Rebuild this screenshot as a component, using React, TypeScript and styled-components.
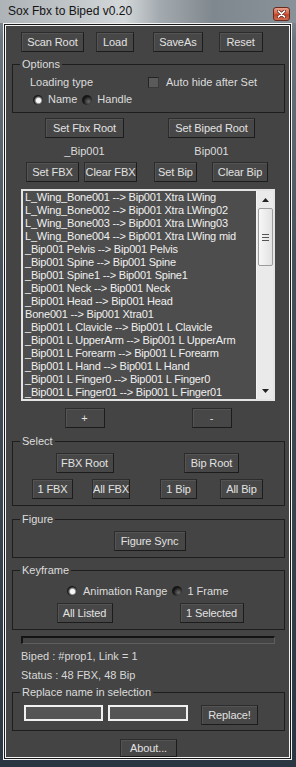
import React from 'react';
import styled, { createGlobalStyle } from 'styled-components';

const Global = createGlobalStyle`
  html, body { margin: 0; padding: 0; background: #fff; }
  body { font-family: "Liberation Sans", Arial, sans-serif; }
  * { box-sizing: border-box; }
`;

const Window = styled.div`
  width: 296px;
  height: 767px;
  display: flex;
  flex-direction: column;
  overflow: hidden;
  background: linear-gradient(180deg, #8c959b 0px, #6c767d 40px, #46525b 260px, #2a3641 767px);
`;

const TitleBar = styled.div`
  height: 23px;
  flex: none;
  display: flex;
  justify-content: space-between;
  padding: 0 6px 0 8px;
  background: linear-gradient(90deg, #aeb3b7 0%, #bfc4c7 22%, #d3d7d9 42%, #a3aaaf 54%, #7f888e 72%, #899298 100%);
`;

const TitleText = styled.div`
  font-size: 12px;
  line-height: 23px;
  color: #141414;
`;

const CloseBtn = styled.div`
  align-self: flex-end;
  margin-bottom: 2px;
  width: 17px;
  height: 14px;
  border-radius: 3px;
  border: 1px solid #6a2a1c;
  background: linear-gradient(180deg, #e9a08c 0%, #d6654a 45%, #c2452b 55%, #cf6a4c 100%);
  display: flex;
  align-items: center;
  justify-content: center;
`;

const ClientOuter = styled.div`
  flex: 1;
  margin: 0 4px 7px 3px;
  border: 1px solid #f4f4f4;
  background: #1b1b1b;
  padding: 1px;
  display: flex;
`;

const Client = styled.div`
  flex: 1;
  border: 1px solid #f4f4f4;
  background: #444444;
  display: flex;
  flex-direction: column;
  color: #dcdcdc;
  font-size: 11px;
`;

const Btn = styled.button<{ $w: number; $h?: number; $ml?: number }>`
  width: ${p => p.$w}px;
  height: ${p => p.$h ?? 20}px;
  margin: 0 0 0 ${p => p.$ml ?? 0}px;
  padding: 0;
  flex: none;
  background: #474747;
  border: 1px solid #2c2c2c;
  border-right-color: #1c1c1c;
  border-bottom-color: #1c1c1c;
  box-shadow: inset 1px 1px 0 #545454;
  color: #e2e2e2;
  font: 11px "Liberation Sans", Arial, sans-serif;
  letter-spacing: -0.1px;
  white-space: nowrap;
  overflow: visible;
  cursor: default;
`;

const Grid = styled.div<{ $cols: string; $mt: number; $pl: number }>`
  display: grid;
  grid-template-columns: ${p => p.$cols};
  justify-items: center;
  align-items: center;
  margin-top: ${p => p.$mt}px;
  padding-left: ${p => p.$pl}px;
`;

const FlexRow = styled.div<{ $mt?: number; $pl: number }>`
  display: flex;
  align-items: flex-start;
  margin-top: ${p => p.$mt ?? 0}px;
  padding-left: ${p => p.$pl}px;
`;

const Group = styled.div<{ $mt: number; $h: number; $pt: number }>`
  position: relative;
  margin: ${p => p.$mt}px 4px 0 6px;
  height: ${p => p.$h}px;
  border: 1px solid #1e1e1e;
  padding-top: ${p => p.$pt}px;
  flex: none;
`;

const GroupLabel = styled.span`
  position: absolute;
  top: -8px;
  left: 7px;
  padding: 0 2px;
  background: #444444;
  line-height: 14px;
  color: #dcdcdc;
`;

const OptionsGrid = styled.div`
  display: grid;
  grid-template-columns: 118px auto;
  grid-template-rows: 13px 13px;
  row-gap: 4px;
  padding-left: 17px;
  line-height: 13px;
`;

const Inline = styled.div<{ $ml?: number }>`
  display: flex;
  align-items: center;
  margin-left: ${p => p.$ml ?? 0}px;
  white-space: nowrap;
`;

const Radio = styled.span<{ $on?: boolean; $ml?: number }>`
  display: inline-block;
  width: 10px;
  height: 10px;
  border-radius: 50%;
  flex: none;
  margin-left: ${p => p.$ml ?? 0}px;
  background: ${p =>
    p.$on
      ? 'radial-gradient(circle at 55% 55%, #f6f6f6 0 2.2px, #9a9a9a 3px, #1a1a1a 4.6px)'
      : 'radial-gradient(circle at 65% 65%, #6a6a6a 0, #3a3a3a 3px, #161616 5px)'};
`;

const RadioText = styled.span<{ $ml: number }>`
  margin-left: ${p => p.$ml}px;
`;

const Check = styled.span`
  display: inline-block;
  width: 11px;
  height: 11px;
  flex: none;
  background: #5a5a5a;
  border: 1px solid #242424;
  border-right-color: #3a3a3a;
  border-bottom-color: #3a3a3a;
  margin-right: 7px;
`;

const Caption = styled.div`
  line-height: 14px;
  color: #dcdcdc;
`;

const ListBox = styled.div`
  margin: 7px 0 0 15px;
  width: 254px;
  height: 212px;
  flex: none;
  border: 2px solid #e4e4e4;
  background: #4d4d4d;
  display: flex;
`;

const ListItems = styled.div`
  flex: 1;
  overflow: hidden;
  padding-left: 2px;
  color: #f0f0f0;
  font-size: 11px;
  letter-spacing: -0.2px;
  line-height: 13px;
  white-space: nowrap;
`;

const ScrollBar = styled.div`
  width: 17px;
  flex: none;
  background: #eaeaea;
  border-left: 1px solid #f4f4f4;
  display: flex;
  flex-direction: column;
  align-items: center;
`;

const ArrowBox = styled.div`
  height: 17px;
  width: 100%;
  display: flex;
  align-items: center;
  justify-content: center;
`;

const Thumb = styled.div`
  width: 15px;
  height: 58px;
  border: 1px solid #9c9c9c;
  border-radius: 2px;
  background: linear-gradient(90deg, #f7f7f7, #e2e2e2);
  display: flex;
  flex-direction: column;
  align-items: center;
  justify-content: center;
  gap: 2px;
`;

const Grip = styled.span`
  width: 7px;
  height: 1px;
  background: #555;
`;

const Track = styled.div`
  flex: 1;
`;

const Progress = styled.div`
  margin: 6px 0 0 15px;
  width: 254px;
  height: 8px;
  flex: none;
  border-top: 2px solid #141414;
  border-left: 2px solid #141414;
  border-right: 1px solid #5e5e5e;
  border-bottom: 1px solid #5e5e5e;
  background: #444;
`;

const InfoLine = styled.div<{ $mt: number }>`
  margin-top: ${p => p.$mt}px;
  padding-left: 15px;
  line-height: 13px;
  color: #d8d8d8;
`;

const TextField = styled.div<{ $w: number; $ml?: number }>`
  width: ${p => p.$w}px;
  height: 16px;
  margin-left: ${p => p.$ml ?? 0}px;
  border: 2px solid #f0f0f0;
  background: #555555;
  flex: none;
`;

const Center = styled.div<{ $mt: number }>`
  display: flex;
  justify-content: center;
  margin-top: ${p => p.$mt}px;
  padding-left: 2px;
`;

const items = [
  'L_Wing_Bone001 --> Bip001 Xtra LWing',
  'L_Wing_Bone002 --> Bip001 Xtra LWing02',
  'L_Wing_Bone003 --> Bip001 Xtra LWing03',
  'L_Wing_Bone004 --> Bip001 Xtra LWing mid',
  '_Bip001 Pelvis --> Bip001 Pelvis',
  '_Bip001 Spine --> Bip001 Spine',
  '_Bip001 Spine1 --> Bip001 Spine1',
  '_Bip001 Neck --> Bip001 Neck',
  '_Bip001 Head --> Bip001 Head',
  'Bone001 --> Bip001 Xtra01',
  '_Bip001 L Clavicle --> Bip001 L Clavicle',
  '_Bip001 L UpperArm --> Bip001 L UpperArm',
  '_Bip001 L Forearm --> Bip001 L Forearm',
  '_Bip001 L Hand --> Bip001 L Hand',
  '_Bip001 L Finger0 --> Bip001 L Finger0',
  '_Bip001 L Finger01 --> Bip001 L Finger01',
];

const Tri = ({ down }: { down?: boolean }) => (
  <svg width="7" height="4" viewBox="0 0 7 4">
    <polygon points={down ? '0,0 7,0 3.5,4' : '0,4 7,4 3.5,0'} fill="#222" />
  </svg>
);

export default function App() {
  return (
    <>
      <Global />
      <Window>
        <TitleBar>
          <TitleText>Sox Fbx to Biped v0.20</TitleText>
          <CloseBtn>
            <svg width="9" height="8" viewBox="0 0 9 8">
              <path d="M1.5 1.2 L7.5 6.8 M7.5 1.2 L1.5 6.8" stroke="#5a1a10" strokeWidth="3.2" strokeLinecap="round" />
              <path d="M1.5 1.2 L7.5 6.8 M7.5 1.2 L1.5 6.8" stroke="#ffffff" strokeWidth="1.8" strokeLinecap="round" />
            </svg>
          </CloseBtn>
        </TitleBar>
        <ClientOuter>
          <Client>
            <Grid $cols="repeat(4, 62.75px)" $mt={6} $pl={15}>
              <Btn $w={63}>Scan Root</Btn>
              <Btn $w={38}>Load</Btn>
              <Btn $w={50}>SaveAs</Btn>
              <Btn $w={44}>Reset</Btn>
            </Grid>

            <Group $mt={12} $h={49} $pt={11}>
              <GroupLabel>Options</GroupLabel>
              <OptionsGrid>
                <Inline>Loading type</Inline>
                <Inline>
                  <Check />
                  Auto hide after Set
                </Inline>
                <Inline $ml={3}>
                  <Radio $on />
                  <RadioText $ml={5}>Name</RadioText>
                  <Radio $ml={5} />
                  <RadioText $ml={5}>Handle</RadioText>
                </Inline>
              </OptionsGrid>
            </Group>

            <Grid $cols="127px 127px" $mt={5} $pl={15}>
              <Btn $w={79}>Set Fbx Root</Btn>
              <Btn $w={87}>Set Biped Root</Btn>
            </Grid>
            <Grid $cols="127px 127px" $mt={6} $pl={15}>
              <Caption>_Bip001</Caption>
              <Caption>Bip001</Caption>
            </Grid>
            <FlexRow $mt={4} $pl={20}>
              <Btn $w={53}>Set FBX</Btn>
              <Btn $w={53} $ml={5}>Clear FBX</Btn>
              <Btn $w={43} $ml={17}>Set Bip</Btn>
              <Btn $w={56} $ml={15}>Clear Bip</Btn>
            </FlexRow>

            <ListBox>
              <ListItems>
                {items.map(t => (
                  <div key={t}>{t}</div>
                ))}
              </ListItems>
              <ScrollBar>
                <ArrowBox>
                  <Tri />
                </ArrowBox>
                <Thumb>
                  <Grip />
                  <Grip />
                  <Grip />
                </Thumb>
                <Track />
                <ArrowBox>
                  <Tri down />
                </ArrowBox>
              </ScrollBar>
            </ListBox>

            <Grid $cols="127px 127px" $mt={7} $pl={15}>
              <Btn $w={40}>+</Btn>
              <Btn $w={40}>-</Btn>
            </Grid>

            <Group $mt={13} $h={65} $pt={11}>
              <GroupLabel>Select</GroupLabel>
              <Grid $cols="127px 127px" $mt={0} $pl={8}>
                <Btn $w={58}>FBX Root</Btn>
                <Btn $w={55}>Bip Root</Btn>
              </Grid>
              <FlexRow $mt={6} $pl={19}>
                <Btn $w={41}>1 FBX</Btn>
                <Btn $w={38} $ml={19}>All FBX</Btn>
                <Btn $w={37} $ml={30}>1 Bip</Btn>
                <Btn $w={43} $ml={23}>All Bip</Btn>
              </FlexRow>
            </Group>

            <Group $mt={13} $h={39} $pt={11}>
              <GroupLabel>Figure</GroupLabel>
              <Center $mt={0}>
                <Btn $w={72}>Figure Sync</Btn>
              </Center>
            </Group>

            <Group $mt={12} $h={60} $pt={14}>
              <GroupLabel>Keyframe</GroupLabel>
              <FlexRow $pl={54}>
                <Inline>
                  <Radio $on />
                  <RadioText $ml={6}>Animation Range</RadioText>
                  <Radio $ml={5} />
                  <RadioText $ml={5}>1 Frame</RadioText>
                </Inline>
              </FlexRow>
              <Grid $cols="127px 127px" $mt={6} $pl={8}>
                <Btn $w={56}>All Listed</Btn>
                <Btn $w={64}>1 Selected</Btn>
              </Grid>
            </Group>

            <Progress />
            <InfoLine $mt={6}>Biped : #prop1, Link = 1</InfoLine>
            <InfoLine $mt={6}>Status : 48 FBX, 48 Bip</InfoLine>

            <Group $mt={10} $h={39} $pt={12}>
              <GroupLabel>Replace name in selection</GroupLabel>
              <FlexRow $pl={11}>
                <TextField $w={79} />
                <TextField $w={80} $ml={5} />
                <Btn $w={57} $ml={13}>Replace!</Btn>
              </FlexRow>
            </Group>

            <Center $mt={8}>
              <Btn $w={57} $h={18}>About...</Btn>
            </Center>
          </Client>
        </ClientOuter>
      </Window>
    </>
  );
}
